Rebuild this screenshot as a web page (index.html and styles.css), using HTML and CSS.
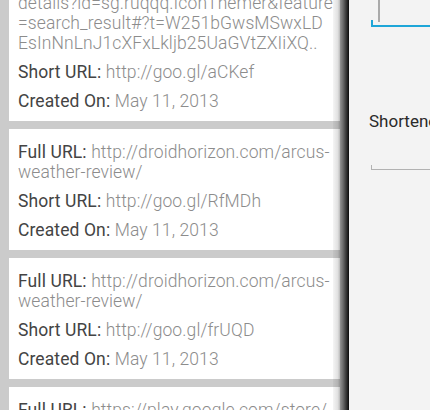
FILE: index.html
```html
<!DOCTYPE html>
<html lang="en">
<head>
    <meta charset="UTF-8">
    <meta name="viewport" content="width=device-width, initial-scale=1.0">
    <title>URL History</title>
    <link rel="stylesheet" href="styles.css">
</head>
<body>
    <div class="screen">
        <div class="history">
            <div class="entry">
                <p class="row"><span class="label">Full URL:</span> <span class="value">https://play.google.com/store/<br>apps/<br>details?id=sg.ruqqq.IconThemer&amp;feature<br>=search_result#?t=W251bGwsMSwxLD<br>EsInNnLnJ1cXFxLkljb25UaGVtZXIiXQ..</span></p>
                <p class="row"><span class="label">Short URL:</span> <span class="value">http://goo.gl/aCKef</span></p>
                <p class="row"><span class="label">Created On:</span> <span class="value">May 11, 2013</span></p>
            </div>

            <div class="entry">
                <p class="row"><span class="label">Full URL:</span> <span class="value">http://droidhorizon.com/arcus-<br>weather-review/</span></p>
                <p class="row"><span class="label">Short URL:</span> <span class="value">http://goo.gl/RfMDh</span></p>
                <p class="row"><span class="label">Created On:</span> <span class="value">May 11, 2013</span></p>
            </div>

            <div class="entry">
                <p class="row"><span class="label">Full URL:</span> <span class="value">http://droidhorizon.com/arcus-<br>weather-review/</span></p>
                <p class="row"><span class="label">Short URL:</span> <span class="value">http://goo.gl/frUQD</span></p>
                <p class="row"><span class="label">Created On:</span> <span class="value">May 11, 2013</span></p>
            </div>

            <div class="entry">
                <p class="row"><span class="label">Full URL:</span> <span class="value">https://play.google.com/store/<br>apps/</span></p>
            </div>
        </div>

        <!-- Shortener drawer sliding over the list -->
        <div class="drawer">
            <div class="drawer-shadow"></div>
            <div class="field field-active"><span class="caret"></span></div>
            <p class="field-label">Shortened URL</p>
            <div class="field"></div>
        </div>
    </div>
</body>
</html>
```

FILE: styles.css
```css
* {
    margin: 0;
    padding: 0;
    box-sizing: border-box;
}

body {
    font-family: Roboto, "Liberation Sans", sans-serif;
    background-color: #cbcbcb;
    overflow: hidden;
}

.screen {
    display: flex;
    width: 430px;
    height: 410px;
    overflow: hidden;
}

.history {
    width: 349px;
    flex-shrink: 0;
    display: flex;
    flex-direction: column;
    gap: 8px;
    padding: 0 9px;
    margin-top: -60px;
}

.entry {
    background-color: #fff;
    padding: 13px 8px 10px 9px;
}

.row {
    font-size: 17.5px;
    line-height: 20px;
    letter-spacing: 0.1px;
    white-space: nowrap;
}

.row + .row {
    margin-top: 9px;
}

.label {
    color: #444;
    font-weight: 400;
}

.value {
    color: #8c8c8c;
    font-weight: 300;
}

/* Drawer */
.drawer {
    position: relative;
    flex: 1;
    background-color: #f3f3f3;
    padding-left: 20px;
}

.drawer-shadow {
    position: absolute;
    top: 0;
    right: 100%;
    width: 16px;
    height: 100%;
    background: linear-gradient(to right, rgba(0, 0, 0, 0.04), rgba(0, 0, 0, 0.12) 30%, rgba(0, 0, 0, 0.5) 65%, rgba(0, 0, 0, 0.95));
}

.field {
    position: relative;
    margin-left: 2px;
    height: 39px;
    border-bottom: 1px solid #b2b2b2;
}

.field::before {
    content: "";
    position: absolute;
    left: 0;
    bottom: 0;
    width: 1px;
    height: 4px;
    background-color: #b2b2b2;
}

.field-active {
    margin-left: 2px;
    height: 27px;
    border-bottom: 2px solid #1ea6d8;
}

.field-active::before {
    width: 2px;
    height: 5px;
    background-color: #1ea6d8;
}

.caret {
    position: absolute;
    left: 7px;
    top: 0;
    width: 2px;
    height: 22px;
    background-color: #aaa;
}

.field-label {
    margin-top: 84px;
    font-size: 17px;
    line-height: 20px;
    color: #2a2a2a;
    white-space: nowrap;
}
```
